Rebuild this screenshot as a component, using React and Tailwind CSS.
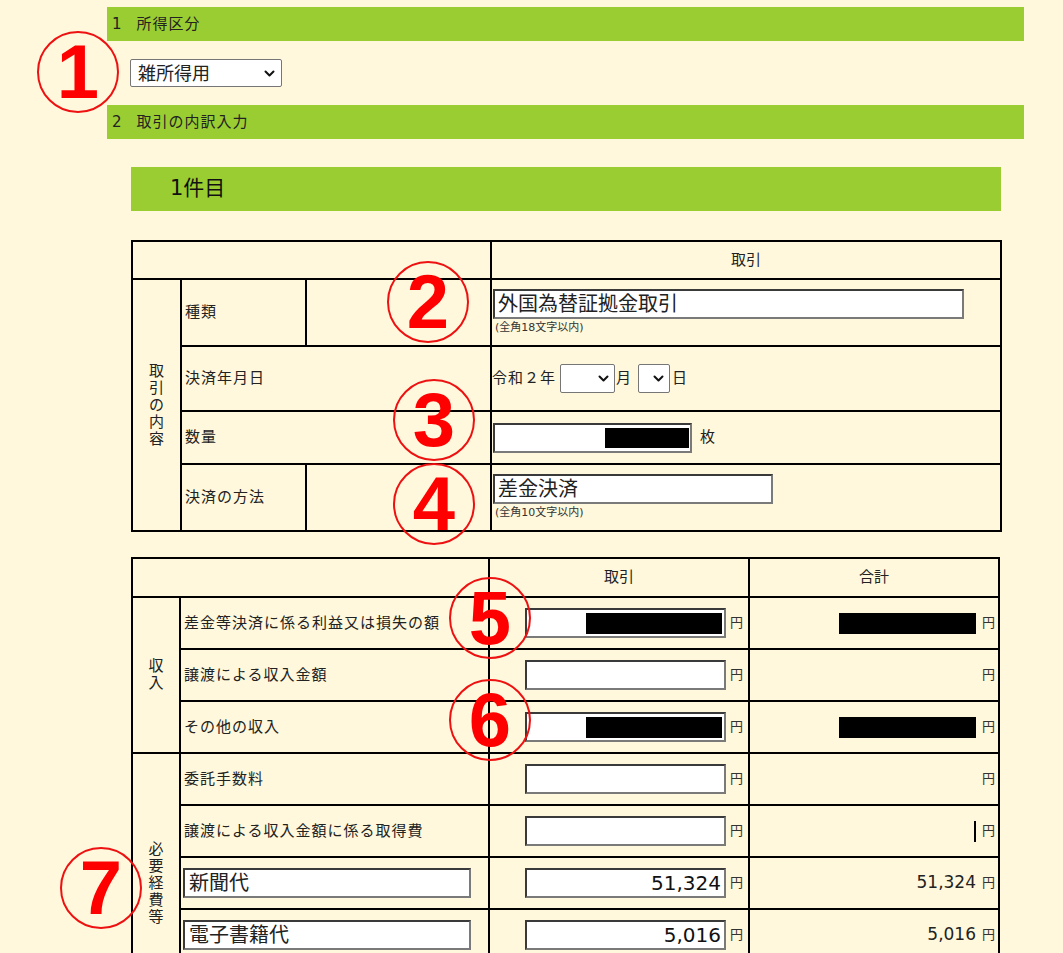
import React from 'react';

const Chevron = () => (
  <svg width="11" height="7" viewBox="0 0 11 7" fill="none">
    <path d="M1.5 1.5l4 4 4-4" stroke="#111" strokeWidth="2" strokeLinecap="round" strokeLinejoin="round" />
  </svg>
);

const Circle = ({ n, className }) => (
  <div className={`absolute w-[82px] h-[82px] rounded-full border-2 border-[#ee1111] flex items-center justify-center ${className}`}>
    <span className="font-['Liberation_Sans',sans-serif] font-bold text-[76px] leading-none text-[#ff0000]">{n}</span>
  </div>
);

const Box = ({ className = '', children }) => (
  <div className={`bg-white border-2 border-t-[#3a3a3a] border-l-[#3a3a3a] border-r-[#7a7a7a] border-b-[#7a7a7a] flex items-center ${className}`}>
    {children}
  </div>
);

const Vertical = ({ text, className = '' }) => (
  <div className={`flex flex-col items-center text-[15px] leading-[17px] ${className}`}>
    {text.split('').map((c, i) => (
      <span key={i}>{c}</span>
    ))}
  </div>
);

const Yen = () => <span className="text-[13px] text-[#333]">円</span>;

const cell = 'border-2 border-black';
const label = 'border-2 border-black pl-[3px] text-[15px] tracking-[1px] text-[#222]';

const rows = [
  { label: '差金等決済に係る利益又は損失の額', redact: [136, 137] },
  { label: '譲渡による収入金額' },
  { label: 'その他の収入', redact: [136, 137] },
];

const expenses = [
  { label: '委託手数料' },
  { label: '譲渡による収入金額に係る取得費', bar: true },
  { item: '新聞代', value: '51,324' },
  { item: '電子書籍代', value: '5,016' },
  { item: '', value: '' },
];

const AmountCells = ({ r }) => (
  <>
    <td className={cell}>
      <div className="flex items-center justify-end gap-[4px] pr-[5px]">
        <Box className="w-[201px] h-[30px] justify-end pr-[2px]">
          {r.redact && <div className="bg-black" style={{ width: r.redact[0], height: 21 }} />}
          {r.value && <span className="text-[20px] leading-none pr-[1px] text-[#111]">{r.value}</span>}
        </Box>
        <Yen />
      </div>
    </td>
    <td className={cell}>
      <div className="flex items-center justify-end gap-[6px] pr-[3px]">
        {r.redact && <div className="bg-black" style={{ width: r.redact[1], height: 21 }} />}
        {r.bar && <div className="w-[2px] h-[21px] bg-black" />}
        {r.value && <span className="text-[17px] text-[#222]">{r.value}</span>}
        <Yen />
      </div>
    </td>
  </>
);

export default function App() {
  return (
    <div className="relative min-h-screen bg-[#fff8dc] pt-[7px] pb-[40px] text-[#222] font-['DejaVu_Sans','Noto_Sans_CJK_JP',sans-serif]">
      <div className="ml-[107px] w-[917px]">
        <div className="h-[34px] bg-[#9acd32] flex items-center pl-[5px] text-[15px] tracking-[1px]">
          <span>1</span>
          <span className="ml-[14px]">所得区分</span>
        </div>
        <div className="h-[64px] flex items-center pl-[23px]">
          <div className="w-[152px] h-[28px] bg-white border border-[#767676] rounded-[2px] flex items-center justify-between pl-[7px] pr-[6px] text-[18px]">
            <span>雑所得用</span>
            <Chevron />
          </div>
        </div>
        <div className="h-[34px] bg-[#9acd32] flex items-center pl-[5px] text-[15px] tracking-[1px]">
          <span>2</span>
          <span className="ml-[14px]">取引の内訳入力</span>
        </div>

        <div className="ml-[24px] w-[870px]">
          <div className="mt-[28px] h-[44px] bg-[#9acd32] flex items-center pl-[39px] text-[21px] text-[#111]">1件目</div>

          <table className="mt-[29px] w-[869px] table-fixed border-collapse">
            <colgroup>
              <col className="w-[49px]" />
              <col className="w-[125px]" />
              <col className="w-[185px]" />
              <col className="w-[510px]" />
            </colgroup>
            <tbody>
              <tr className="h-[38px]">
                <td colSpan={3} className={cell}></td>
                <td className={`${cell} text-center text-[15px]`}>取引</td>
              </tr>
              <tr className="h-[67px]">
                <td rowSpan={4} className={cell}>
                  <Vertical text="取引の内容" />
                </td>
                <td className={label}>種類</td>
                <td className={cell}></td>
                <td className={`${cell} pl-[1px]`}>
                  <Box className="w-[471px] h-[30px] pl-[3px] text-[20px] leading-none">外国為替証拠金取引</Box>
                  <div className="text-[11px] pl-[2px] mt-[1px] text-[#333]">(全角18文字以内)</div>
                </td>
              </tr>
              <tr className="h-[65px]">
                <td colSpan={2} className={label}>決済年月日</td>
                <td className={`${cell} pl-0`}>
                  <div className="flex items-center text-[15px]">
                    <span className="mr-[4px] tracking-[1px]">令和２年</span>
                    <div className="w-[55px] h-[29px] bg-white border border-[#767676] rounded-[2px] flex items-center justify-end pr-[5px]">
                      <Chevron />
                    </div>
                    <span className="ml-[1px] mr-[7px]">月</span>
                    <div className="w-[32px] h-[29px] bg-white border border-[#767676] rounded-[2px] flex items-center justify-end pr-[5px]">
                      <Chevron />
                    </div>
                    <span className="ml-[2px]">日</span>
                  </div>
                </td>
              </tr>
              <tr className="h-[53px]">
                <td colSpan={2} className={label}>数量</td>
                <td className={`${cell} pl-[1px]`}>
                  <div className="flex items-center gap-[8px]">
                    <Box className="w-[199px] h-[30px] justify-end pr-[1px]">
                      <div className="w-[84px] h-[20px] bg-black" />
                    </Box>
                    <span className="text-[15px]">枚</span>
                  </div>
                </td>
              </tr>
              <tr className="h-[67px]">
                <td className={label}>決済の方法</td>
                <td className={cell}></td>
                <td className={`${cell} pl-[1px]`}>
                  <Box className="w-[280px] h-[30px] pl-[3px] text-[20px] leading-none">差金決済</Box>
                  <div className="text-[11px] pl-[2px] mt-[1px] text-[#333]">(全角10文字以内)</div>
                </td>
              </tr>
            </tbody>
          </table>

          <table className="mt-[25px] w-[867px] table-fixed border-collapse">
            <colgroup>
              <col className="w-[48px]" />
              <col className="w-[309px]" />
              <col className="w-[260px]" />
              <col className="w-[250px]" />
            </colgroup>
            <tbody>
              <tr className="h-[39px]">
                <td colSpan={2} className={cell}></td>
                <td className={`${cell} text-center text-[15px]`}>取引</td>
                <td className={`${cell} text-center text-[15px]`}>合計</td>
              </tr>
              {rows.map((r, i) => (
                <tr key={i} className="h-[52px]">
                  {i === 0 && (
                    <td rowSpan={3} className={cell}>
                      <Vertical text="収入" />
                    </td>
                  )}
                  <td className={label}>{r.label}</td>
                  <AmountCells r={r} />
                </tr>
              ))}
              {expenses.map((r, i) => (
                <tr key={i} className="h-[52px]">
                  {i === 0 && (
                    <td rowSpan={5} className={cell}>
                      <Vertical text="必要経費等" />
                    </td>
                  )}
                  {r.label ? (
                    <td className={label}>{r.label}</td>
                  ) : (
                    <td className={`${cell} pl-[2px]`}>
                      <Box className="w-[288px] h-[30px] pl-[4px] text-[20px] leading-none">{r.item}</Box>
                    </td>
                  )}
                  <AmountCells r={r} />
                </tr>
              ))}
            </tbody>
          </table>
        </div>
      </div>

      <Circle n="1" className="left-[37px] top-[31px]" />
      <Circle n="2" className="left-[387px] top-[261px]" />
      <Circle n="3" className="left-[393px] top-[379px]" />
      <Circle n="4" className="left-[393px] top-[463px]" />
      <Circle n="5" className="left-[449px] top-[577px]" />
      <Circle n="6" className="left-[449px] top-[679px]" />
      <Circle n="7" className="left-[60px] top-[847px]" />
    </div>
  );
}
